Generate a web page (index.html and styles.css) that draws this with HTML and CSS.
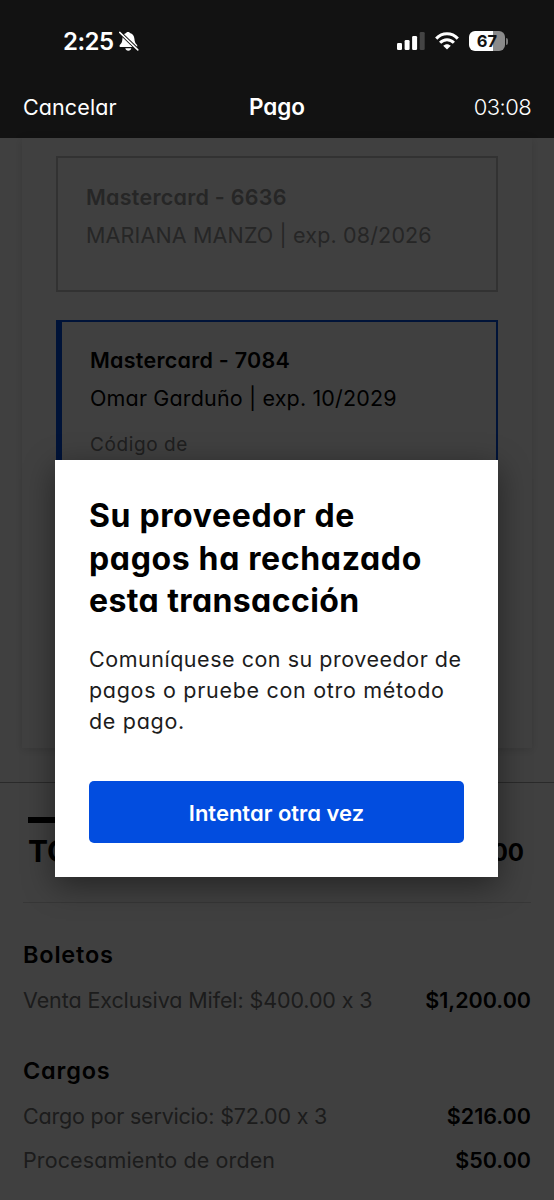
FILE: index.html
```
<!DOCTYPE html>
<html lang="es">
<head>
<meta charset="utf-8">
<title>Pago</title>
<link rel="stylesheet" href="styles.css">
</head>
<body>
<div class="app">
  <header class="top">
    <div class="status">
      <div class="clock"><span class="clock-time">2:25</span>
        <svg class="bell" viewBox="0 0 20 21"><path d="M9 1c1 0 1.600.4 1.900 1 2.700.7 4.300 2.900 4.500 5.700.2 3.200 1 4.600 2 5.600.6.6.9 1 .9 1.600 0 .7-.5 1.200-1.300 1.200H1.900C1 16.100.5 15.700.5 15c0-.7.4-1.100 1.100-1.900 1-1 1.600-2.400 1.800-5.200C3.600 5.100 4.700 2.700 7.200 2 7.400 1.400 8 1 9 1zM6.300 17.300h6c-.3 1.500-1.400 2.500-3 2.500s-2.700-1-3-2.500z" fill="#fff"/><path d="M0 .7L19.500 19.500" stroke="#121212" stroke-width="3.400"/><path d="M.7 1.400L18.800 18.900" stroke="#fff" stroke-width="1.500" stroke-linecap="round"/></svg>
      </div>
      <div class="indicators">
        <svg class="signal" viewBox="0 0 28 18"><g fill="#fff"><rect x="0" y="11" width="5" height="7" rx="1.300"/><rect x="7.600" y="8" width="5" height="10" rx="1.300"/><rect x="15.100" y="4" width="5" height="14" rx="1.300"/></g><rect x="22.700" y="0" width="5" height="18" rx="1.300" fill="#444"/></svg>
        <svg class="wifi" viewBox="0 0 24 18"><g fill="none" stroke="#fff" stroke-width="3"><path d="M1.200 6.600C7.200.2 16.800.2 22.800 6.600"/><path d="M5.100 10.800c3.900-4.100 9.900-4.100 13.800 0"/></g><path d="M8.200 13.800c2.200-2.100 5.400-2.100 7.600 0L12 17.600z" fill="#fff"/></svg>
        <div class="battery"><span class="battery-body">67</span><span class="battery-tip"></span></div>
      </div>
    </div>
    <nav class="nav"><span class="cancel">Cancelar</span><span class="title">Pago</span><span class="timer">03:08</span></nav>
  </header>
  <main class="page">
    <section class="payment">
      <div class="card disabled"><div class="card-name">Mastercard - 6636</div><div class="card-info">MARIANA MANZO | exp. 08/2026</div></div>
      <div class="card selected"><div class="card-name">Mastercard - 7084</div><div class="card-info">Omar Garduño | exp. 10/2029</div><div class="code">Código de</div></div>
    </section>
    <section class="summary">
      <div class="total"><span class="total-label">TOTAL</span><span class="total-sum">$1,466.00</span></div>
      <h2 class="group boletos">Boletos</h2>
      <div class="line"><span class="detail">Venta Exclusiva Mifel: $400.00 x 3</span><b class="price">$1,200.00</b></div>
      <h2 class="group cargos">Cargos</h2>
      <div class="line"><span class="detail fee">Cargo por servicio: $72.00 x 3</span><b class="price">$216.00</b></div>
      <div class="line"><span class="order">Procesamiento de orden</span><b class="price">$50.00</b></div>
    </section>
    <div class="shade"></div>
  </main>
  <div class="dialog" role="dialog">
    <h1 class="dialog-title">Su proveedor de<br>pagos ha rechazado<br><span class="tight">esta transacción</span></h1>
    <p class="dialog-text">Comuníquese con su proveedor de<br><span class="loose">pagos o pruebe con otro método</span><br><span class="loose">de pago.</span></p>
    <button class="retry">Intentar otra vez</button>
  </div>
</div>
</body>
</html>
```
FILE: styles.css
```
* { box-sizing: border-box; }
body { margin: 0; background: #404040; }
.app {
  position: relative;
  width: 554px;
  height: 1200px;
  overflow: hidden;
  display: flex;
  flex-direction: column;
  font-family: Inter, "Liberation Sans", sans-serif;
  font-feature-settings: "cv11", "calt" 0;
  font-size: 22px;
  white-space: nowrap;
}
.top { height: 138px; flex: none; background: #121212; color: #fff; padding-top: 27px; }
.status { height: 30px; padding: 0 46px 0 63px; display: flex; justify-content: space-between; align-items: center; }
.clock { display: flex; align-items: center; gap: 5px; margin-top: -1px; }
.clock-time { font-size: 24px; font-weight: 600; letter-spacing: -0.5px; }
.bell { width: 20px; height: 21px; }
.indicators { display: flex; align-items: center; margin-top: -2px; }
.signal { width: 28px; height: 18px; margin-right: 10px; }
.wifi { width: 24px; height: 18px; margin-right: 10px; }
.battery { display: flex; align-items: center; gap: 1px; }
.battery-body { width: 36px; height: 20px; border-radius: 6px; background: linear-gradient(90deg, #fff 67%, #8b8b8b 67%); color: #121212; font-size: 16.5px; font-weight: 700; line-height: 20px; text-align: center; }
.battery-tip { width: 2px; height: 7px; border-radius: 0 3px 3px 0; background: #777; }
.nav { height: 30px; margin-top: 35px; padding: 0 23px; display: grid; grid-template-columns: 1fr auto 1fr; align-items: center; line-height: 30px; }
.cancel { font-size: 21.5px; font-weight: 400; letter-spacing: 0.1px; }
.title { font-size: 22.5px; font-weight: 600; }
.timer { font-weight: 300; text-align: right; letter-spacing: -0.6px; }
.page { position: relative; flex: 1; background: #fff; }
.payment { height: 610px; margin: 0 22px; padding: 18px 34px 0; box-shadow: 0 2px 9px rgba(0, 0, 0, 0.14); }
.card { border: 2px solid #c8c8c8; }
.disabled { height: 136px; padding: 24px 28px 0 28px; color: #989898; }
.selected { height: 390px; margin-top: 28px; padding: 23px 28px 0 28px; border-color: #024ddf; border-left-width: 6px; color: #000; }
.card-name { font-size: 21.5px; font-weight: 600; line-height: 30px; letter-spacing: 0.25px; }
.card-info { font-size: 21.5px; font-weight: 400; line-height: 30px; margin-top: 8px; letter-spacing: 0.15px; }
.code { font-size: 19px; font-weight: 400; line-height: 26px; margin-top: 19px; color: #7c7c7c; letter-spacing: 0.6px; }
.summary { margin-top: 34px; border-top: 1px solid #a8a8a8; padding: 35px 23px 0; }
.total { height: 85px; border-bottom: 1px solid #dcdcdc; padding: 0 7px 0 5px; display: flex; justify-content: space-between; font-weight: 700; }
.total-label { border-top: 6px solid #000; padding-top: 9px; font-size: 30px; line-height: 38px; height: 60px; margin-top: -1px; }
.total-sum { font-size: 24px; line-height: 69px; }
.group { font-size: 23.5px; font-weight: 600; line-height: 32px; letter-spacing: 0.8px; margin: 36px 0 0; }
.line { display: flex; justify-content: space-between; font-size: 21.5px; line-height: 30px; margin-top: 14px; font-weight: 400; color: #707070; }
.detail { letter-spacing: -0.1px; }
.fee { letter-spacing: -0.2px; }
.order { letter-spacing: 0.12px; }
.price { font-weight: 600; color: #000; }
.cargos { margin-top: 40px; }
.shade { position: absolute; inset: 0; background: rgba(0, 0, 0, 0.75); }
.dialog { position: absolute; left: 55px; top: 460px; width: 443px; height: 417px; padding: 35px 34px 0; background: #fff; box-shadow: 0 8px 30px rgba(0, 0, 0, 0.45); }
.dialog-title { margin: 0; font-size: 32px; line-height: 42.5px; font-weight: 700; letter-spacing: 0.65px; color: #000; }
.tight { letter-spacing: 0.4px; }
.dialog-text { margin: 21px 0 0; font-size: 21.5px; line-height: 31px; font-weight: 400; letter-spacing: 0.52px; color: #1c1c1c; }
.loose { letter-spacing: 0.7px; }
.retry { display: block; width: 375px; height: 62px; margin-top: 44px; padding: 2px 0 0; border: 0; border-radius: 5px; background: #024ddf; color: #fff; font: inherit; font-feature-settings: inherit; font-weight: 600; text-align: center; }
```
